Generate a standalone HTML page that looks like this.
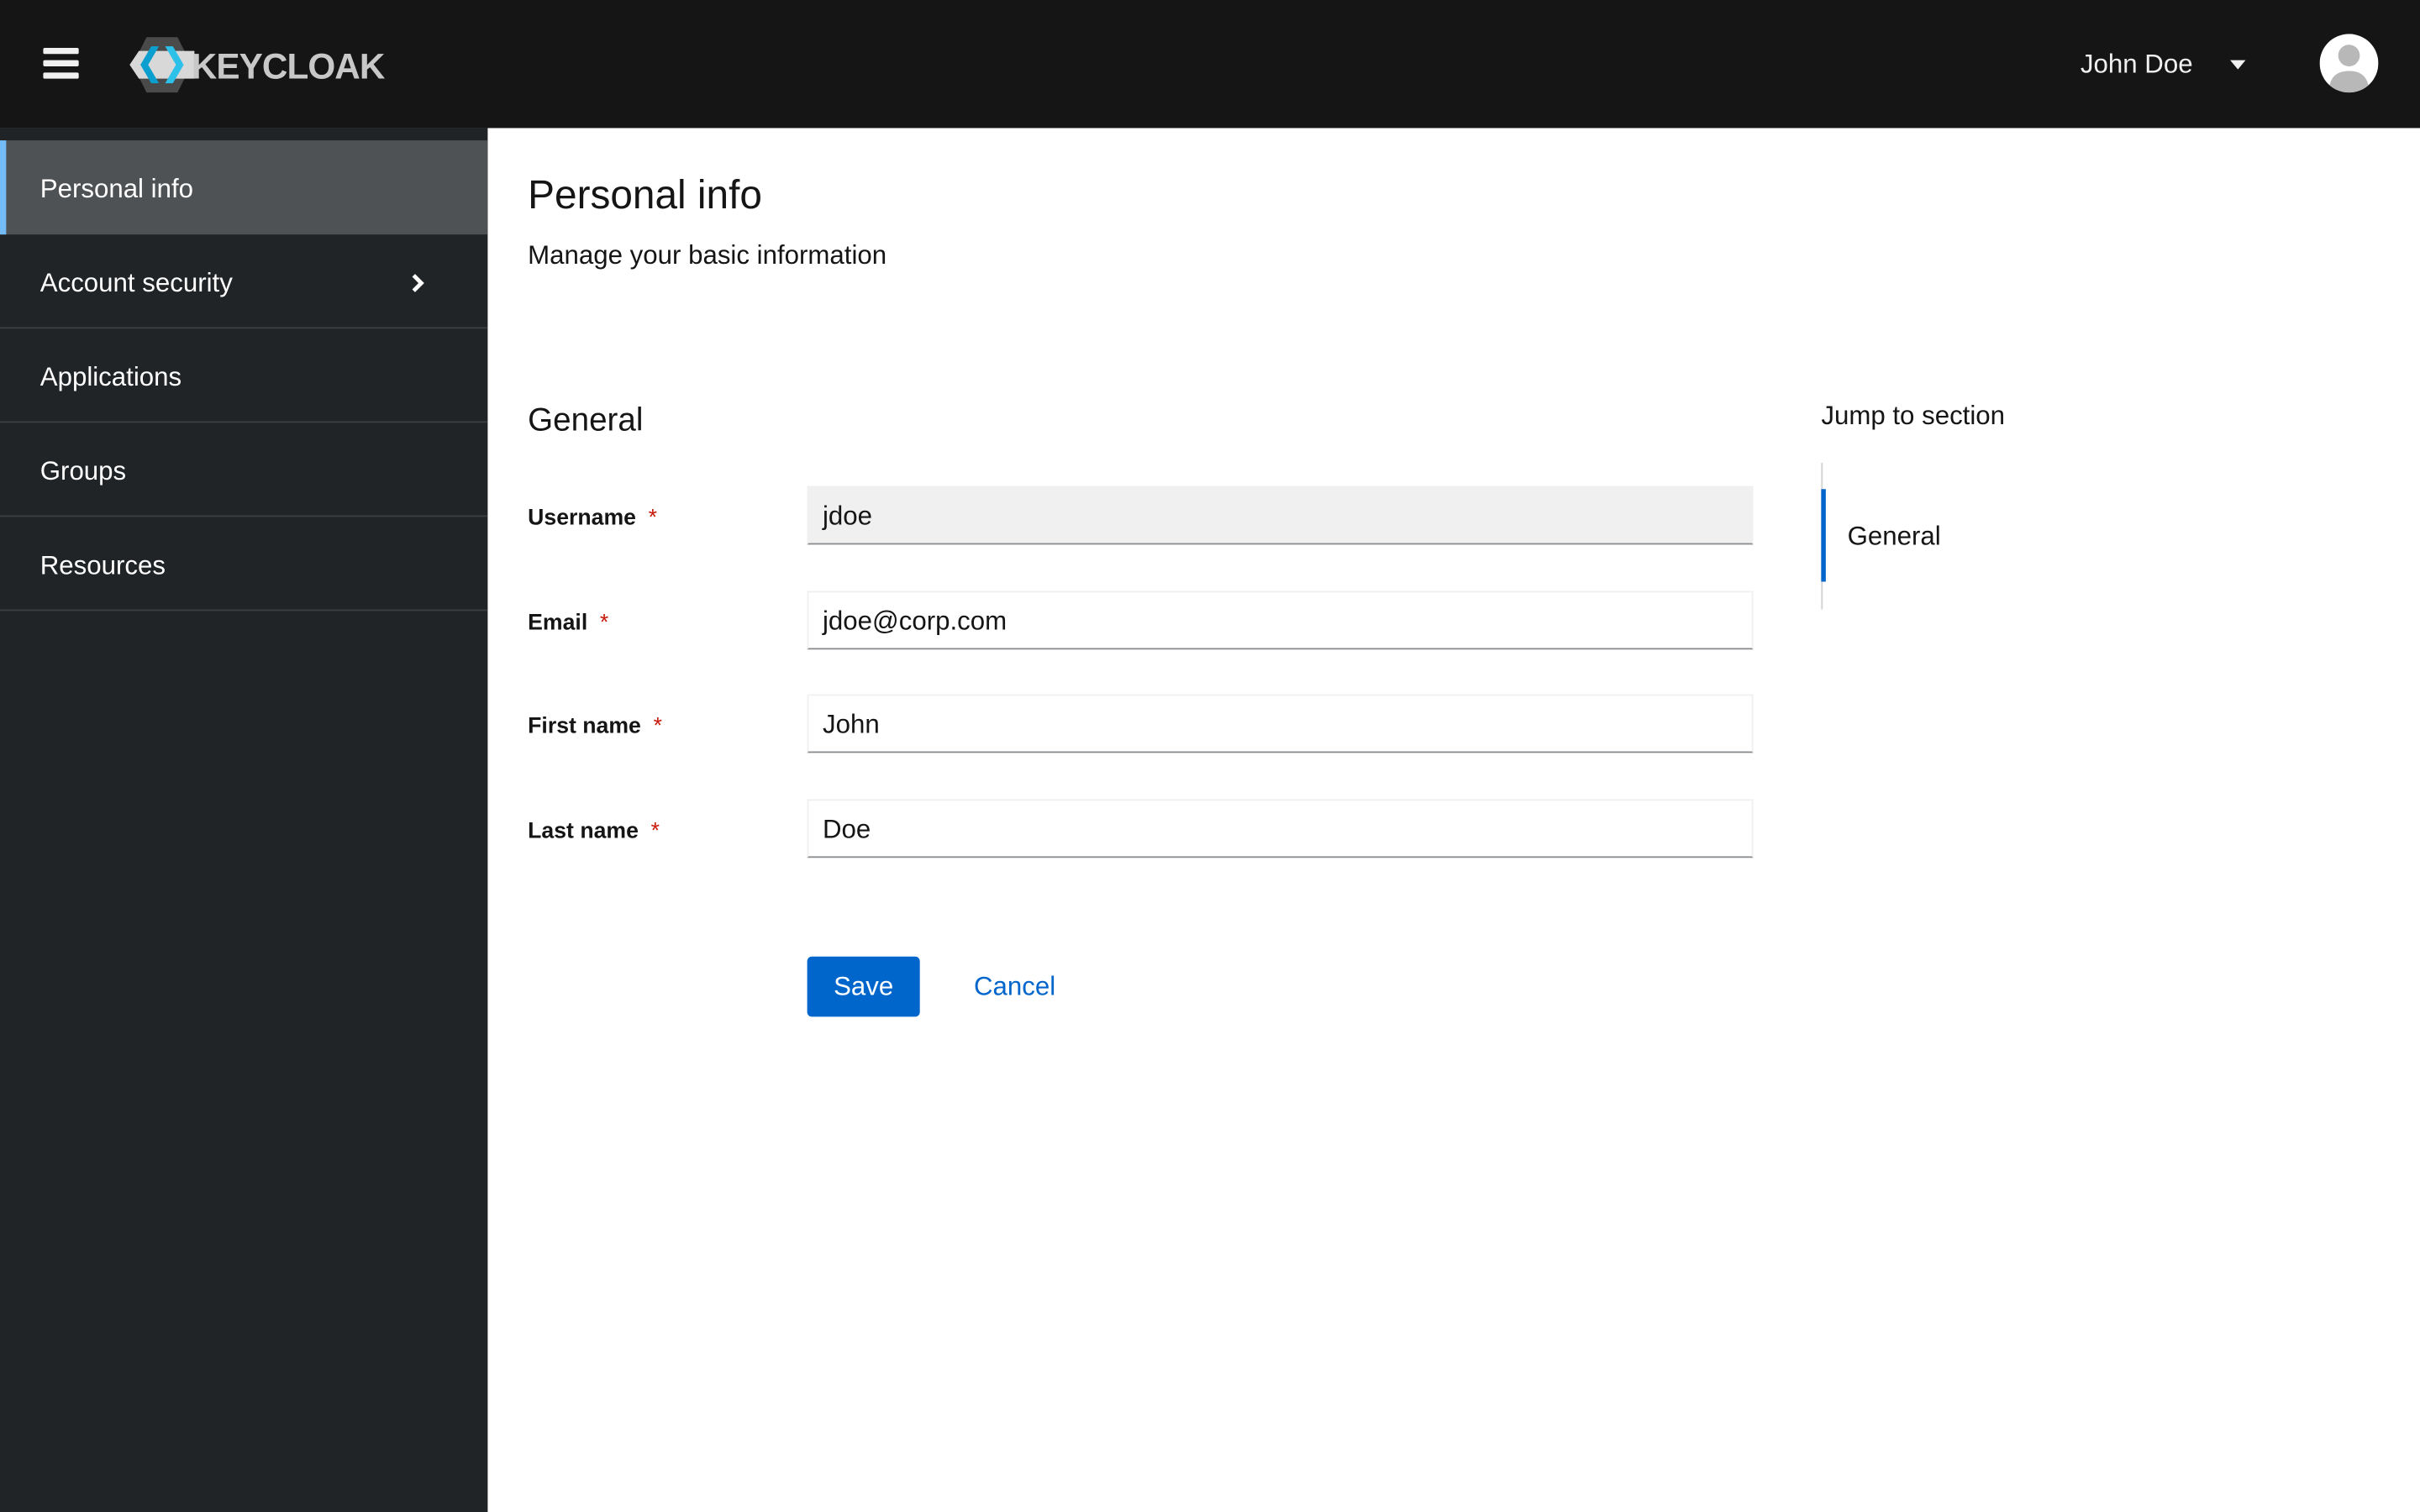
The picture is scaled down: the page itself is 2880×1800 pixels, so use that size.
<!DOCTYPE html>
<html><head><meta charset="utf-8"><style>
html,body{margin:0;padding:0;width:2880px;height:1800px;overflow:hidden;background:#fff}
#w{position:absolute;left:0;top:0;width:1568px;height:980px;transform:scale(1.836735);transform-origin:0 0;font-family:"Liberation Sans",sans-serif;color:#151515}
.hdr{position:absolute;left:0;top:0;width:1568px;height:83px;background:#151515}
.side{position:absolute;left:0;top:83px;width:316px;height:897px;background:#212427}
.item{position:absolute;left:0;width:316px;height:60px;border-bottom:1px solid #3c3f42;color:#fff;font-size:17px;line-height:62px;padding-left:26px;box-sizing:border-box}
.abs{position:absolute}
.lbl{position:absolute;left:342px;font-size:14.5px;font-weight:bold}
.lbl span{color:#c9190b;font-weight:normal;margin-left:8px}
.inp{position:absolute;left:523px;width:613px;height:38px;box-sizing:border-box;border:1px solid #f0f0f0;border-bottom:1px solid #8a8d90;font-size:17px;line-height:38px;padding-left:9px}
</style></head><body><div id="w">
<div class="hdr">
 <div class="abs" style="left:28px;top:31px;width:23px;height:4px;background:#f0f0f0;border-radius:1px"></div>
 <div class="abs" style="left:28px;top:39px;width:23px;height:4px;background:#f0f0f0;border-radius:1px"></div>
 <div class="abs" style="left:28px;top:47px;width:23px;height:4px;background:#f0f0f0;border-radius:1px"></div>
 <svg class="abs" style="left:84px;top:24px" width="42" height="36" viewBox="0 0 42 36">
  <polygon points="11,0 31,0 40,18 31,36 11,36 2,18" fill="#4a4a4a"/>
  <polygon points="0,18 6,9 42,9 42,27 6,27" fill="#d8d8d8"/>
  <polygon points="14,6 19,6 12,18 19,30 14,30 7,18" fill="#0b9fd0"/>
  <polygon points="23,6 28,6 35,18 28,30 23,30 30,18" fill="#2dc1ea"/>
 </svg>
 <div class="abs" style="left:124px;top:30px;font-size:23px;font-weight:bold;color:#c8c8c8;letter-spacing:-0.5px">KEYCLOAK</div>
 <div class="abs" style="left:1348px;top:32px;font-size:17px;color:#f0f0f0">John Doe</div>
 <div class="abs" style="left:1445px;top:39px;width:0;height:0;border-left:5px solid transparent;border-right:5px solid transparent;border-top:6px solid #f0f0f0"></div>
 <svg class="abs" style="left:1503px;top:22px" width="38" height="38" viewBox="0 0 38 38">
  <defs><clipPath id="c"><circle cx="19" cy="19" r="19"/></clipPath></defs>
  <circle cx="19" cy="19" r="19" fill="#fff"/>
  <g clip-path="url(#c)"><circle cx="19" cy="14" r="7" fill="#b8b8b8"/><path d="M6,38 Q6,24 19,24 Q32,24 32,38Z" fill="#b8b8b8"/></g>
 </svg>
</div>
<div class="side">
 <div class="item" style="top:8px;height:61px;background:#4f5255;border-left:4px solid #73bcf7;padding-left:22px;border-bottom:none;line-height:63px">Personal info</div>
 <div class="item" style="top:70px">Account security<svg style="position:absolute;left:266px;top:24px" width="9" height="13" viewBox="0 0 9 13"><path d="M2,1.5 L7,6.5 L2,11.5" stroke="#fff" stroke-width="2.6" fill="none"/></svg></div>
 <div class="item" style="top:131px">Applications</div>
 <div class="item" style="top:192px">Groups</div>
 <div class="item" style="top:253px">Resources</div>
</div>
<div class="abs" style="left:342px;top:111px;font-size:26px">Personal info</div>
<div class="abs" style="left:342px;top:156px;font-size:17px">Manage your basic information</div>
<div class="abs" style="left:342px;top:261px;font-size:21px">General</div>
<div class="lbl" style="top:328px">Username<span>*</span></div>
<div class="lbl" style="top:396px">Email<span>*</span></div>
<div class="lbl" style="top:463px">First name<span>*</span></div>
<div class="lbl" style="top:531px">Last name<span>*</span></div>
<div class="inp" style="top:315px;background:#f0f0f0">jdoe</div>
<div class="inp" style="top:383px">jdoe@corp.com</div>
<div class="inp" style="top:450px">John</div>
<div class="inp" style="top:518px">Doe</div>
<div class="abs" style="left:523px;top:620px;width:73px;height:39px;background:#0066cc;border-radius:3px;color:#fff;font-size:17px;line-height:40px;text-align:center">Save</div>
<div class="abs" style="left:631px;top:630px;font-size:17px;color:#0066cc">Cancel</div>
<div class="abs" style="left:1180px;top:260px;font-size:17px">Jump to section</div>
<div class="abs" style="left:1180px;top:300px;width:1px;height:95px;background:#d2d2d2"></div>
<div class="abs" style="left:1180px;top:317px;width:3px;height:60px;background:#0066cc"></div>
<div class="abs" style="left:1197px;top:338px;font-size:17px">General</div>
</div></body></html>
